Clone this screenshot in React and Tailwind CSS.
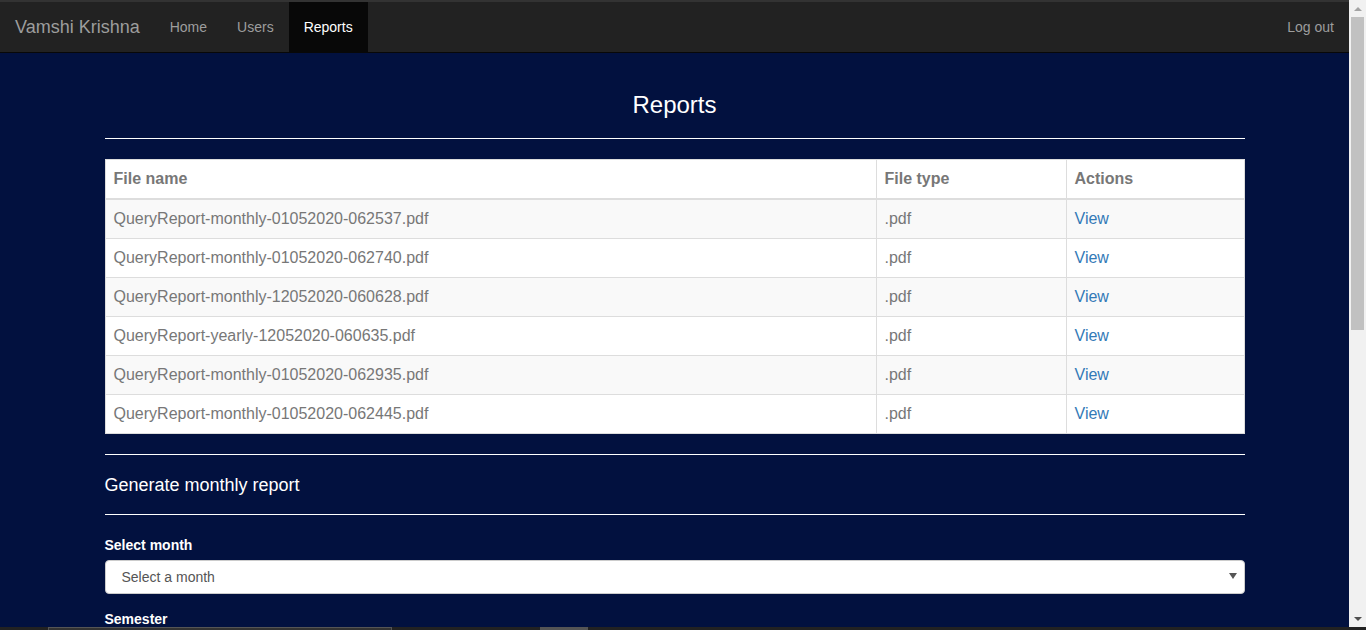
import React from "react";

const reports = [
  "QueryReport-monthly-01052020-062537.pdf",
  "QueryReport-monthly-01052020-062740.pdf",
  "QueryReport-monthly-12052020-060628.pdf",
  "QueryReport-yearly-12052020-060635.pdf",
  "QueryReport-monthly-01052020-062935.pdf",
  "QueryReport-monthly-01052020-062445.pdf",
];

const Navbar = () => (
  <nav className="bg-[#222] border-t-2 border-t-[#333] border-b border-b-[#080808] h-[53px] flex items-stretch text-[14px]">
    <a className="px-[15px] flex items-center text-[18px] text-[#9d9d9d]">Vamshi Krishna</a>
    <a className="px-[15px] flex items-center text-[#9d9d9d]">Home</a>
    <a className="px-[15px] flex items-center text-[#9d9d9d]">Users</a>
    <a className="px-[15px] flex items-center text-white bg-[#080808] w-[79px]">Reports</a>
    <div className="flex-1" />
    <a className="px-[15px] flex items-center text-[#9d9d9d]">Log out</a>
  </nav>
);

const Scrollbar = () => (
  <div className="w-[17px] h-[627px] bg-[#f1f1f1] flex flex-col items-center shrink-0">
    <div className="h-[17px] w-full flex items-center justify-center">
      <div className="w-0 h-0 border-l-[4px] border-r-[4px] border-b-[4px] border-l-transparent border-r-transparent border-b-[#a3a3a3]" />
    </div>
    <div className="w-[13px] h-[313px] bg-[#c1c1c1]" />
    <div className="flex-1" />
    <div className="h-[17px] w-full flex items-center justify-center">
      <div className="w-0 h-0 border-l-[4px] border-r-[4px] border-t-[4px] border-l-transparent border-r-transparent border-t-[#505050]" />
    </div>
  </div>
);

export default function App() {
  return (
    <div className="h-[630px] overflow-hidden bg-[#02113f] font-['Liberation_Sans',Arial,sans-serif] relative">
      <div className="flex">
        <div className="flex-1 min-w-0">
          <Navbar />
          <main className="w-[1140px] mx-auto pt-[39px]">
            <h3 className="text-[24px] leading-[26px] text-white text-center">Reports</h3>
            <hr className="mt-[20px] mb-[20px] border-t border-white" />

            {/* Reports table */}
            <table className="w-full border-collapse bg-white text-[16px] leading-[22px] text-[#777]">
              <thead>
                <tr className="h-[39px]">
                  <th className="w-[771px] text-left font-bold px-2 py-2 border border-[#ddd] border-b-2">File name</th>
                  <th className="w-[190px] text-left font-bold px-2 py-2 border border-[#ddd] border-b-2">File type</th>
                  <th className="text-left font-bold px-2 py-2 border border-[#ddd] border-b-2">Actions</th>
                </tr>
              </thead>
              <tbody>
                {reports.map((r, i) => (
                  <tr key={r} className={i % 2 === 0 ? "bg-[#f9f9f9]" : "bg-white"}>
                    <td className="px-2 py-2 border border-[#ddd]">{r}</td>
                    <td className="px-2 py-2 border border-[#ddd]">.pdf</td>
                    <td className="px-2 py-2 border border-[#ddd]">
                      <a className="text-[#337ab7]">View</a>
                    </td>
                  </tr>
                ))}
              </tbody>
            </table>

            <hr className="mt-[20px] border-t border-white" />
            <h4 className="mt-[20px] text-[18px] leading-[20px] text-white">Generate monthly report</h4>
            <hr className="mt-[19px] border-t border-white" />

            <div className="mt-[20px]">
              <label className="block text-[14px] leading-[20px] font-bold text-white mb-[5px]">Select month</label>
              <div className="relative">
                <select className="w-full h-[34px] appearance-none bg-white rounded-[4px] border border-[#ccc] pl-4 text-[14px] text-[#555]">
                  <option>Select a month</option>
                </select>
                <span className="absolute right-[8px] top-[13px] w-0 h-0 border-l-[4px] border-r-[4px] border-t-[6px] border-l-transparent border-r-transparent border-t-[#555]" />
              </div>
            </div>
            <div className="mt-[15px]">
              <label className="block text-[14px] leading-[20px] font-bold text-white">Semester</label>
            </div>
          </main>
        </div>
        <Scrollbar />
      </div>

      {/* bottom strip */}
      <div className="absolute left-0 right-0 bottom-0 h-[3px] bg-[#222] flex">
        <div className="ml-[48px] w-[344px] h-full bg-[#333] border-t border-x border-[#555]" />
        <div className="ml-[148px] w-[48px] h-full bg-[#555]" />
      </div>
    </div>
  );
}
